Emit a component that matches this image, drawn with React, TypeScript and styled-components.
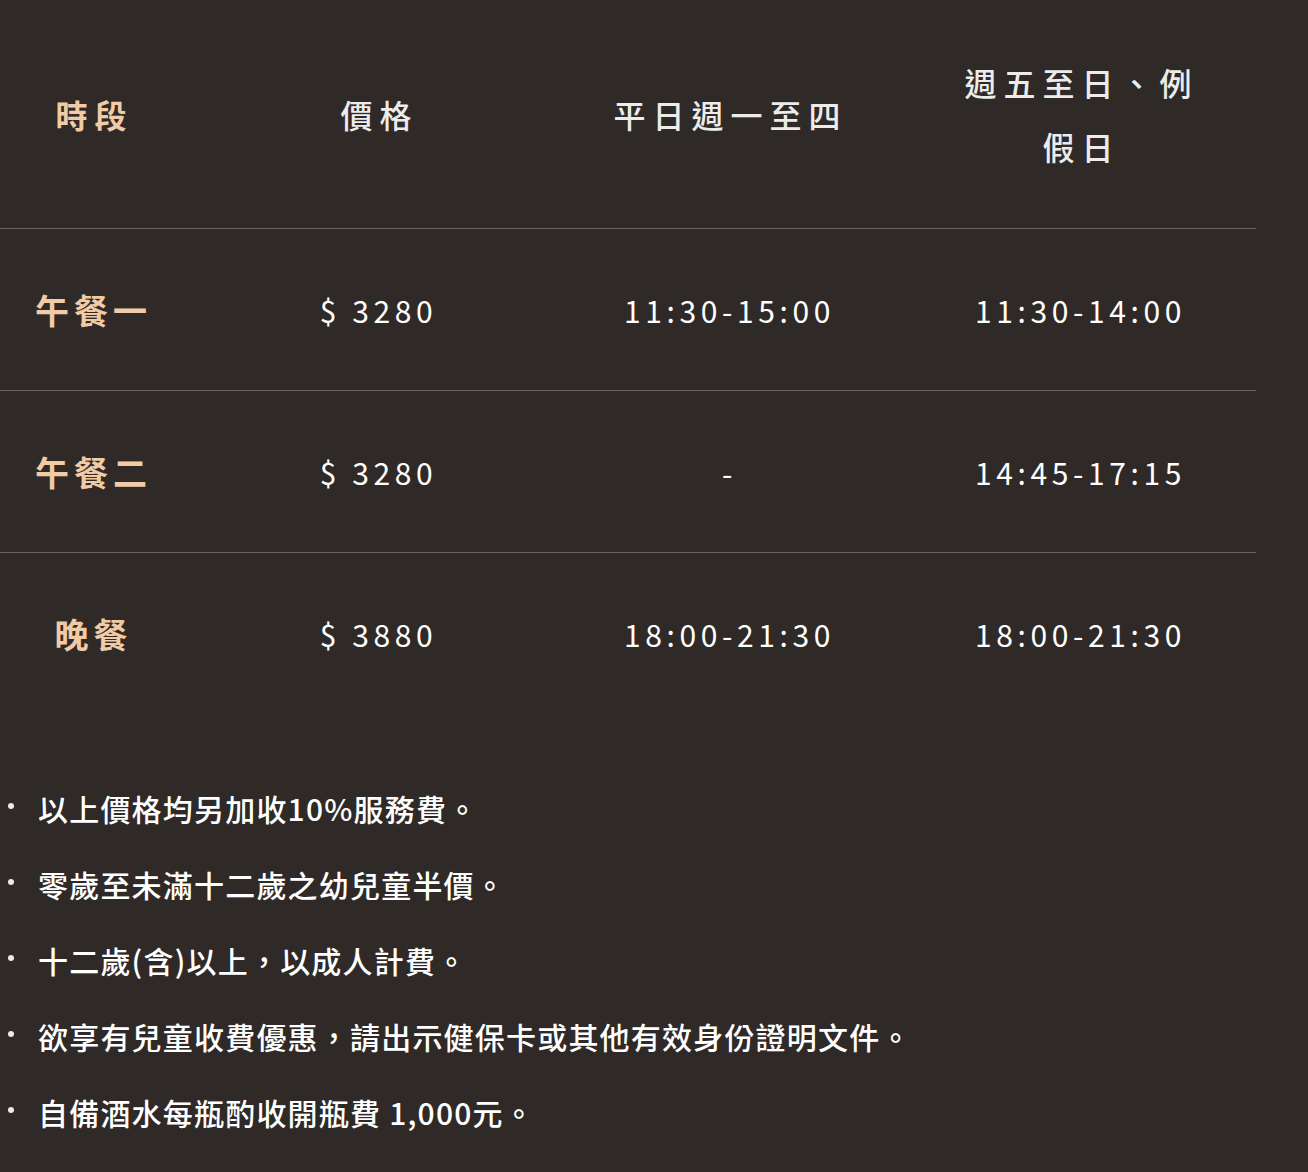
import React from "react";
import styled, { createGlobalStyle } from "styled-components";

const colors = {
    BG: "#2f2a27",
    LINE: "#6b6360",
    PEACH: "#f1caa6",
    WHITE: "#ffffff",
    SOFT_WHITE: "#ececec",
};

const GlobalStyle = createGlobalStyle`
    html, body {
        margin: 0;
        padding: 0;
        background: ${colors.BG};
    }
    body {
        font-family: "Noto Sans CJK TC", "Noto Sans", sans-serif;
        color: ${colors.WHITE};
    }
`;

const Page = styled.div`
    width: 1308px;
    min-height: 1172px;
    background: ${colors.BG};
`;

const Table = styled.div`
    width: 1256px;
    display: flex;
    flex-direction: column;
`;

const Row = styled.div<{ $height: number; $line?: boolean }>`
    display: grid;
    grid-template-columns: 182px 388px 314px 372px;
    align-items: center;
    height: ${({ $height }) => $height}px;
    border-top: ${({ $line }) => ($line ? `1.5px solid ${colors.LINE}` : "none")};
    box-sizing: border-box;
`;

const Cell = styled.div<{ $shift?: boolean }>`
    display: flex;
    justify-content: center;
    padding-left: ${({ $shift }) => ($shift ? "16px" : "0")};
`;

// padding-left = letter-spacing, so the trailing spacing doesn't pull the ink off centre
const HeadText = styled.div<{ $accent?: boolean }>`
    font-size: 32px;
    font-weight: ${({ $accent }) => ($accent ? 700 : 500)};
    letter-spacing: 7px;
    padding-left: 7px;
    line-height: 64px;
    color: ${({ $accent }) => ($accent ? colors.PEACH : colors.SOFT_WHITE)};
    text-align: center;
    max-width: 250px;
`;

const Label = styled.div`
    font-size: 34px;
    font-weight: 700;
    letter-spacing: 5px;
    padding-left: 5px;
    color: ${colors.PEACH};
`;

const Value = styled.div`
    font-size: 30px;
    font-weight: 400;
    letter-spacing: 4.6px;
    padding-left: 5px;
    color: ${colors.WHITE};
`;

const Notes = styled.ul`
    list-style: none;
    margin: 56px 0 0;
    padding: 0;
`;

const Note = styled.li`
    display: flex;
    align-items: center;
    height: 76px;
    font-size: 30px;
    font-weight: 500;
    letter-spacing: 1.2px;
    color: ${colors.WHITE};
`;

const Dot = styled.span`
    width: 6px;
    height: 6px;
    border-radius: 50%;
    background: ${colors.SOFT_WHITE};
    margin: -4px 24px 0 8px;
    flex-shrink: 0;
`;

const rows = [
    { label: "午餐一", price: "$ 3280", weekday: "11:30-15:00", weekend: "11:30-14:00" },
    { label: "午餐二", price: "$ 3280", weekday: "-", weekend: "14:45-17:15" },
    { label: "晚餐", price: "$ 3880", weekday: "18:00-21:30", weekend: "18:00-21:30" },
];

const notes = [
    "以上價格均另加收10%服務費。",
    "零歲至未滿十二歲之幼兒童半價。",
    "十二歲(含)以上，以成人計費。",
    "欲享有兒童收費優惠，請出示健保卡或其他有效身份證明文件。",
    "自備酒水每瓶酌收開瓶費 1,000元。",
];

export default function App() {
    return (
        <Page>
            <GlobalStyle />
            <Table>
                <Row $height={228}>
                    <Cell><HeadText $accent>時段</HeadText></Cell>
                    <Cell><HeadText>價格</HeadText></Cell>
                    <Cell><HeadText>平日週一至四</HeadText></Cell>
                    <Cell $shift><HeadText>週五至日、例假日</HeadText></Cell>
                </Row>
                {rows.map((r) => (
                    <Row key={r.label} $height={162} $line>
                        <Cell><Label>{r.label}</Label></Cell>
                        <Cell><Value>{r.price}</Value></Cell>
                        <Cell><Value>{r.weekday}</Value></Cell>
                        <Cell $shift><Value>{r.weekend}</Value></Cell>
                    </Row>
                ))}
            </Table>
            <Notes>
                {notes.map((n) => (
                    <Note key={n}>
                        <Dot />
                        {n}
                    </Note>
                ))}
            </Notes>
        </Page>
    );
}
